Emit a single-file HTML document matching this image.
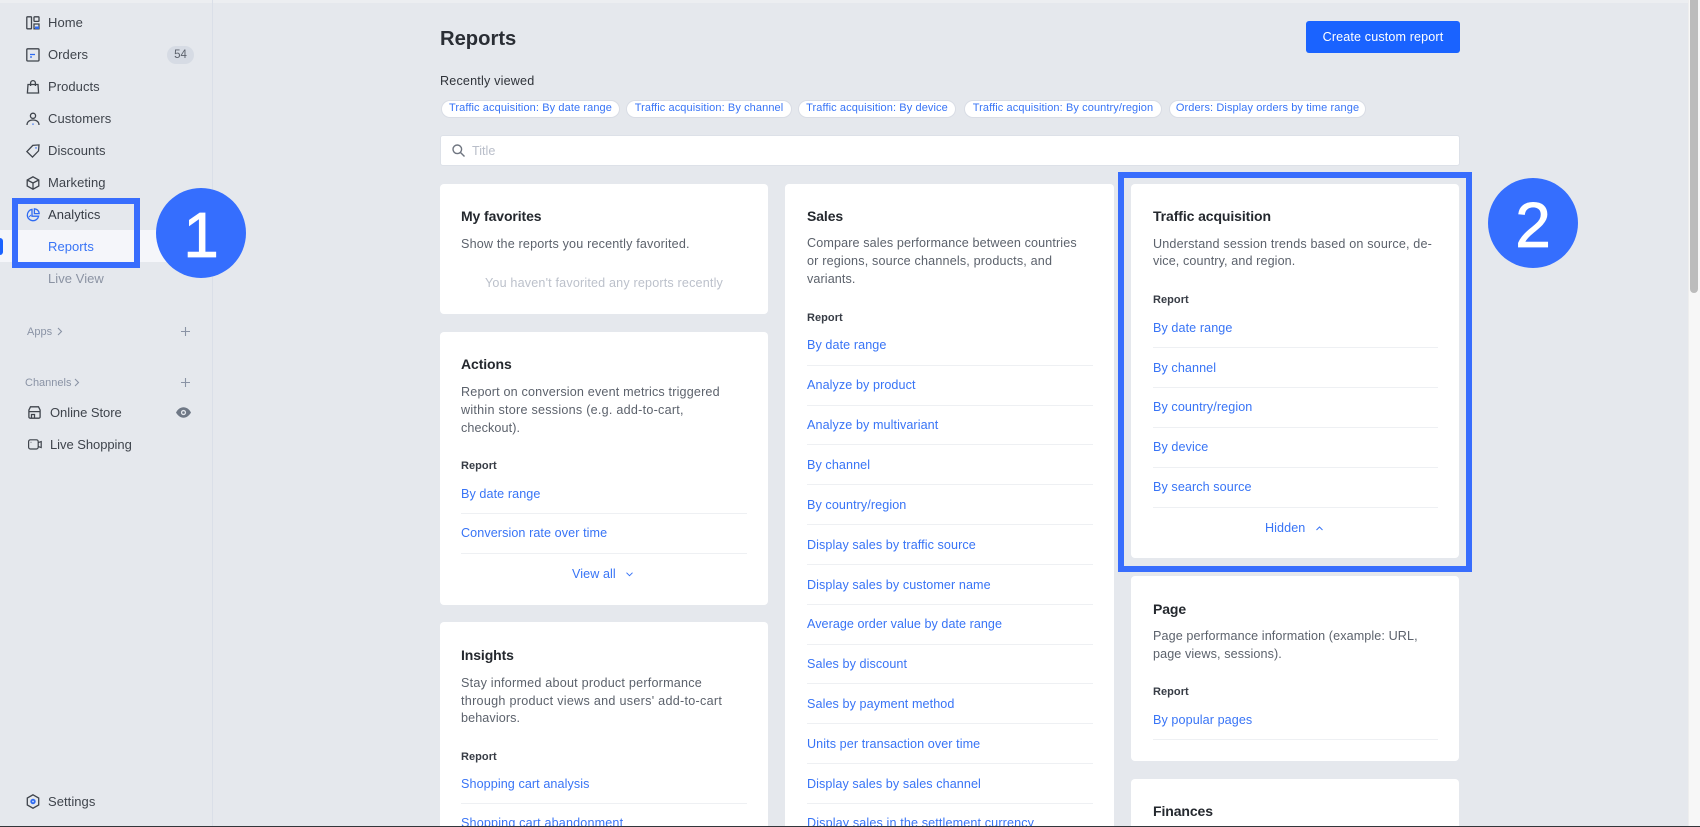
<!DOCTYPE html>
<html lang="en"><head><meta charset="utf-8"><title>Reports</title>
<style>
html,body{margin:0;padding:0;width:1700px;height:827px;overflow:hidden;background:#e5e8ed}
body{position:relative;font-family:"Liberation Sans",sans-serif;font-size:13px;color:#373c45;filter:blur(.3px)}
.t{position:absolute;line-height:18px;height:18px;white-space:nowrap}
.nav{left:48px;color:#3f444c;letter-spacing:.05px}
.card{position:absolute;background:#fff;border-radius:4px;width:328px}
.h{font-size:14px;font-weight:700;color:#24282e;letter-spacing:-.1px}
.d{color:#5c626c;font-size:12.6px;letter-spacing:.1px}
.r{font-size:11px;font-weight:700;color:#373c45;letter-spacing:.05px}
.l{color:#3874f6;font-size:12.6px;letter-spacing:.08px}
.hr{position:absolute;height:1px;background:#eef0f3}
.chip{position:absolute;top:100px;height:15.5px;background:#fff;border:.5px solid #d9dde5;border-radius:9px;color:#3874f6;font-size:11px;line-height:15px;text-align:center;white-space:nowrap;letter-spacing:.1px}
.box{position:absolute;border:6px solid #386dfd;box-sizing:border-box}
.num{position:absolute;width:90px;height:90px;border-radius:50%;background:#356efe;color:#fff;font-size:64px;line-height:95px;text-align:center;-webkit-text-stroke:.8px #fff}
svg{position:absolute;overflow:visible}
</style></head><body>
<div style="position:absolute;left:0;top:0;width:1700px;height:3px;background:#eceef1"></div>
<div style="position:absolute;left:212px;top:0;width:1px;height:827px;background:#dadfe8"></div>

<!-- Sidebar -->
<div style="position:absolute;left:0;top:230px;width:212px;height:32px;background:#f5f6fa"></div>
<div style="position:absolute;left:0;top:238px;width:3px;height:17px;background:#1b63ff;border-radius:0 3px 3px 0"></div>

<svg style="left:26px;top:16px" width="14" height="14" viewBox="0 0 14 14" fill="none" stroke="#3f444c" stroke-width="1.3"><rect x=".8" y=".8" width="4.7" height="12" rx=".6"/><rect x="8" y=".8" width="5" height="4.6" rx=".6"/><path d="M8 8h5v4.8H8z"/><path d="M9 10.5h4v2.4H9z" fill="#2f6bf2" stroke="none"/></svg>
<div class="t nav" style="top:14px">Home</div>
<svg style="left:26px;top:48px" width="14" height="14" viewBox="0 0 14 14" fill="none" stroke="#3f444c" stroke-width="1.3"><rect x=".8" y=".8" width="12.2" height="12.2" rx="1"/><path d="M4 6.5h5" stroke="#2f6bf2"/><path d="M4 9h2" stroke="#2f6bf2"/></svg>
<div class="t nav" style="top:46px">Orders</div>
<div style="position:absolute;left:167px;top:46px;width:27px;height:18px;border-radius:9px;background:#d6dbe4;color:#5c626c;font-size:11.5px;line-height:18px;text-align:center">54</div>
<svg style="left:26px;top:80px" width="14" height="14" viewBox="0 0 14 14" fill="none" stroke="#3f444c" stroke-width="1.3"><path d="M2 4.5h10l.6 8.5H1.4z"/><path d="M4.6 6V3a2.4 2.4 0 0 1 4.8 0v3"/></svg>
<div class="t nav" style="top:78px">Products</div>
<svg style="left:26px;top:112px" width="14" height="14" viewBox="0 0 14 14" fill="none" stroke="#3f444c" stroke-width="1.3"><circle cx="7" cy="3.8" r="2.6"/><path d="M1 13c0-3.2 2.6-5 6-5s6 1.8 6 5"/><path d="M7 11.5v1.3" stroke="#2f6bf2"/></svg>
<div class="t nav" style="top:110px">Customers</div>
<svg style="left:26px;top:144px" width="14" height="14" viewBox="0 0 14 14" fill="none" stroke="#3f444c" stroke-width="1.3"><path d="M.9 7.6 6.8 1.4 13 .9l-.5 6-6 6.2z"/><circle cx="10" cy="3.9" r=".8" fill="#2f6bf2" stroke="none"/></svg>
<div class="t nav" style="top:142px">Discounts</div>
<svg style="left:26px;top:176px" width="14" height="14" viewBox="0 0 14 14" fill="none" stroke="#3f444c" stroke-width="1.3"><path d="M7 .8 12.8 4v6L7 13.2 1.2 10V4zM1.2 4 7 7l5.8-3M7 7v6"/></svg>
<div class="t nav" style="top:174px">Marketing</div>
<svg style="left:26px;top:208px" width="14" height="14" viewBox="0 0 14 14" fill="none" stroke="#2f6bf2" stroke-width="1.3"><path d="M6 1.4a5.7 5.7 0 1 0 6.6 6.8H6z"/><path d="M8.4.8a5 5 0 0 1 4.8 4.8H8.4z"/><path d="M3 9l2-2" stroke-width="1"/></svg>
<div class="t nav" style="top:206px;color:#373c45">Analytics</div>
<div class="t nav" style="top:238px;color:#3874f6">Reports</div>
<div class="t nav" style="top:270px;color:#8b93a3">Live View</div>

<div class="t" style="left:27px;top:323px;font-size:11px;color:#8a93a5">Apps</div>
<svg style="left:57px;top:327px" width="6" height="9" fill="none" stroke="#8a93a5" stroke-width="1.1"><path d="M1 1l3.5 3.5L1 8"/></svg>
<svg style="left:181px;top:327px" width="9" height="9" stroke="#8a93a5" stroke-width="1.1"><path d="M4.5 0v9M0 4.5h9"/></svg>
<div class="t" style="left:25px;top:374px;font-size:11px;color:#8a93a5">Channels</div>
<svg style="left:74px;top:378px" width="6" height="9" fill="none" stroke="#8a93a5" stroke-width="1.1"><path d="M1 1l3.5 3.5L1 8"/></svg>
<svg style="left:181px;top:378px" width="9" height="9" stroke="#8a93a5" stroke-width="1.1"><path d="M4.5 0v9M0 4.5h9"/></svg>

<svg style="left:28px;top:406px" width="13" height="13" viewBox="0 0 13 13" fill="none" stroke="#3f444c" stroke-width="1.3"><path d="M2.5.8h8l1.6 3.2v7a1.2 1.2 0 0 1-1.2 1.2H2.1A1.2 1.2 0 0 1 .9 11V4zM1 5.6h11M3.5 12V8.5h3V12"/></svg>
<div class="t" style="left:50px;top:404px;color:#3f444c;letter-spacing:-.05px">Online Store</div>
<svg style="left:176px;top:407px" width="15" height="11" viewBox="0 0 15 11"><path d="M0 5.5C2 2 4.6.3 7.5.3S13 2 15 5.5C13 9 10.4 10.7 7.5 10.7S2 9 0 5.5z" fill="#6f7886"/><circle cx="7.5" cy="5.5" r="2.6" fill="#e5e8ed"/><circle cx="7.5" cy="5.5" r="1.3" fill="#6f7886"/></svg>
<svg style="left:28px;top:439px" width="14" height="11" viewBox="0 0 14 11" fill="none" stroke="#3f444c" stroke-width="1.2"><rect x=".6" y=".8" width="9.6" height="9.2" rx="1.8"/><path d="M10.2 3.6l3-1v6l-3-1"/><circle cx="3" cy="3.3" r=".5" fill="#3f444c" stroke="none"/></svg>
<div class="t" style="left:50px;top:436px;color:#3f444c;letter-spacing:-.05px">Live Shopping</div>

<svg style="left:26px;top:794px" width="14" height="15" viewBox="0 0 14 15" fill="none" stroke="#3f444c" stroke-width="1.3"><path d="M7 .8 12.7 4v7L7 14.2 1.3 11V4z"/><circle cx="7" cy="7.5" r="2.7" fill="#2f6bf2" stroke="none"/><circle cx="7" cy="7.5" r=".9" fill="#cfe0ff" stroke="none"/></svg>
<div class="t nav" style="top:793px">Settings</div>

<!-- Header -->
<div class="t" style="left:440px;top:26px;height:26px;line-height:26px;font-size:20.2px;font-weight:700;color:#2a2e35">Reports</div>
<div style="position:absolute;left:1306px;top:21px;width:154px;height:32px;background:#1a63ff;border-radius:3px;color:#fff;font-size:12.6px;line-height:32px;text-align:center;letter-spacing:.12px">Create custom report</div>
<div class="t" style="left:440px;top:72px;color:#2f333a;font-size:12.6px;letter-spacing:.18px">Recently viewed</div>

<div class="chip" style="left:441px;width:177px">Traffic acquisition: By date range</div>
<div class="chip" style="left:626px;width:164px">Traffic acquisition: By channel</div>
<div class="chip" style="left:798px;width:156px">Traffic acquisition: By device</div>
<div class="chip" style="left:964px;width:196px">Traffic acquisition: By country/region</div>
<div class="chip" style="left:1169px;width:195px">Orders: Display orders by time range</div>

<div style="position:absolute;left:440px;top:135px;width:1020px;height:31px;box-sizing:border-box;background:#fff;border:1px solid #dde1e8;border-radius:3px"></div>
<svg style="left:452px;top:144px" width="13" height="13" fill="none" stroke="#6f7580" stroke-width="1.4"><circle cx="5.3" cy="5.3" r="4.3"/><path d="M8.5 8.5l4 4"/></svg>
<div class="t" style="left:472px;top:142px;color:#b9bec9;font-size:12.6px">Title</div>

<!-- Column 1 -->
<div class="card" style="left:440px;top:184px;height:130px"></div>
<div class="t h" style="left:461px;top:207px">My favorites</div>
<div class="t d" style="left:461px;top:235px;letter-spacing:.17px">Show the reports you recently favorited.</div>
<div class="t d" style="left:485px;top:274px;color:#bcc1cb;letter-spacing:.17px">You haven't favorited any reports recently</div>

<div class="card" style="left:440px;top:332px;height:273px"></div>
<div class="t h" style="left:461px;top:355px">Actions</div>
<div class="t d" style="left:461px;top:383px;letter-spacing:.17px">Report on conversion event metrics triggered</div>
<div class="t d" style="left:461px;top:401px;letter-spacing:.25px">within store sessions (e.g. add-to-cart,</div>
<div class="t d" style="left:461px;top:419px">checkout).</div>
<div class="t r" style="left:461px;top:457px">Report</div>
<div class="t l" style="left:461px;top:485px">By date range</div><div class="hr" style="left:461px;top:513px;width:286px"></div>
<div class="t l" style="left:461px;top:524px">Conversion rate over time</div><div class="hr" style="left:461px;top:553px;width:286px"></div>
<div class="t l" style="left:572px;top:565px">View all</div>
<svg style="left:626px;top:572px" width="7" height="5" fill="none" stroke="#3874f6" stroke-width="1"><path d="M.5.7l3 3 3-3"/></svg>

<div class="card" style="left:440px;top:622px;height:220px"></div>
<div class="t h" style="left:461px;top:646px">Insights</div>
<div class="t d" style="left:461px;top:674px;letter-spacing:.22px">Stay informed about product performance</div>
<div class="t d" style="left:461px;top:692px;letter-spacing:.28px">through product views and users' add-to-cart</div>
<div class="t d" style="left:461px;top:709px">behaviors.</div>
<div class="t r" style="left:461px;top:748px">Report</div>
<div class="t l" style="left:461px;top:775px">Shopping cart analysis</div><div class="hr" style="left:461px;top:803px;width:286px"></div>
<div class="t l" style="left:461px;top:814px;letter-spacing:.16px">Shopping cart abandonment</div>

<!-- Column 2 -->
<div class="card" style="left:785px;top:184px;width:329px;height:660px"></div>
<div class="t h" style="left:807px;top:207px">Sales</div>
<div class="t d" style="left:807px;top:234px;letter-spacing:.12px">Compare sales performance between countries</div>
<div class="t d" style="left:807px;top:252px;letter-spacing:.17px">or regions, source channels, products, and</div>
<div class="t d" style="left:807px;top:270px">variants.</div>
<div class="t r" style="left:807px;top:309px">Report</div>
<div class="t l" style="left:807px;top:336px">By date range</div><div class="hr" style="left:807px;top:365px;width:286px"></div>
<div class="t l" style="left:807px;top:376px">Analyze by product</div><div class="hr" style="left:807px;top:405px;width:286px"></div>
<div class="t l" style="left:807px;top:416px">Analyze by multivariant</div><div class="hr" style="left:807px;top:444px;width:286px"></div>
<div class="t l" style="left:807px;top:456px">By channel</div><div class="hr" style="left:807px;top:484px;width:286px"></div>
<div class="t l" style="left:807px;top:496px">By country/region</div><div class="hr" style="left:807px;top:524px;width:286px"></div>
<div class="t l" style="left:807px;top:536px">Display sales by traffic source</div><div class="hr" style="left:807px;top:564px;width:286px"></div>
<div class="t l" style="left:807px;top:576px">Display sales by customer name</div><div class="hr" style="left:807px;top:604px;width:286px"></div>
<div class="t l" style="left:807px;top:615px;letter-spacing:.04px">Average order value by date range</div><div class="hr" style="left:807px;top:644px;width:286px"></div>
<div class="t l" style="left:807px;top:655px">Sales by discount</div><div class="hr" style="left:807px;top:683px;width:286px"></div>
<div class="t l" style="left:807px;top:695px">Sales by payment method</div><div class="hr" style="left:807px;top:723px;width:286px"></div>
<div class="t l" style="left:807px;top:735px">Units per transaction over time</div><div class="hr" style="left:807px;top:763px;width:286px"></div>
<div class="t l" style="left:807px;top:775px">Display sales by sales channel</div><div class="hr" style="left:807px;top:803px;width:286px"></div>
<div class="t l" style="left:807px;top:814px;letter-spacing:.13px">Display sales in the settlement currency</div>

<!-- Column 3 -->
<div class="card" style="left:1131px;top:184px;height:374px"></div>
<div class="t h" style="left:1153px;top:207px">Traffic acquisition</div>
<div class="t d" style="left:1153px;top:235px;letter-spacing:.16px">Understand session trends based on source, de-</div>
<div class="t d" style="left:1153px;top:252px">vice, country, and region.</div>
<div class="t r" style="left:1153px;top:291px">Report</div>
<div class="t l" style="left:1153px;top:319px">By date range</div><div class="hr" style="left:1153px;top:347px;width:285px"></div>
<div class="t l" style="left:1153px;top:359px">By channel</div><div class="hr" style="left:1153px;top:387px;width:285px"></div>
<div class="t l" style="left:1153px;top:398px">By country/region</div><div class="hr" style="left:1153px;top:427px;width:285px"></div>
<div class="t l" style="left:1153px;top:438px">By device</div><div class="hr" style="left:1153px;top:467px;width:285px"></div>
<div class="t l" style="left:1153px;top:478px">By search source</div><div class="hr" style="left:1153px;top:507px;width:285px"></div>
<div class="t l" style="left:1265px;top:519px">Hidden</div>
<svg style="left:1316px;top:526px" width="7" height="5" fill="none" stroke="#3874f6" stroke-width="1"><path d="M.5 4l3-3 3 3"/></svg>

<div class="card" style="left:1131px;top:576px;height:185px"></div>
<div class="t h" style="left:1153px;top:600px">Page</div>
<div class="t d" style="left:1153px;top:627px">Page performance information (example: URL,</div>
<div class="t d" style="left:1153px;top:645px">page views, sessions).</div>
<div class="t r" style="left:1153px;top:683px">Report</div>
<div class="t l" style="left:1153px;top:711px">By popular pages</div><div class="hr" style="left:1153px;top:739px;width:285px"></div>

<div class="card" style="left:1131px;top:779px;height:60px"></div>
<div class="t h" style="left:1153px;top:802px">Finances</div>

<!-- Annotations -->
<div class="box" style="left:12px;top:198px;width:128px;height:70px"></div>
<div class="num" style="left:156px;top:188px">1</div>
<div class="box" style="left:1118px;top:172px;width:354px;height:400px"></div>
<div class="num" style="left:1488px;top:178px">2</div>

<!-- Scrollbar -->
<div style="position:absolute;left:1688px;top:0;width:12px;height:827px;background:#f7f7f7;border-left:1px solid #eeeeee;box-sizing:border-box"></div>
<div style="position:absolute;left:1690px;top:0;width:8px;height:293px;background:#bcbcbc;border-radius:0 0 4px 4px"></div>
<div style="position:absolute;left:0;top:826px;width:1700px;height:1px;background:#33363b"></div>
</body></html>
